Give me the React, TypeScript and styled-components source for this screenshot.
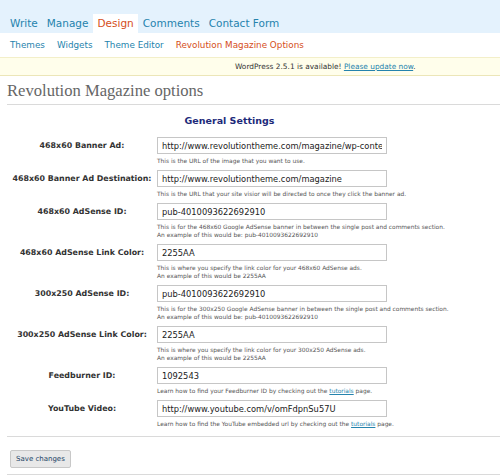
import styled, { createGlobalStyle } from 'styled-components';

const GlobalStyle = createGlobalStyle`
    html, body {
        margin: 0;
        padding: 0;
        background: #fff;
        font-family: "DejaVu Sans", Verdana, sans-serif;
    }
`;

const tabs = ['Write', 'Manage', 'Design', 'Comments', 'Contact Form'];
const subTabs = ['Themes', 'Widgets', 'Theme Editor', 'Revolution Magazine Options'];

const fields = [
    {
        label: '468x60 Banner Ad:',
        value: 'http://www.revolutiontheme.com/magazine/wp-content/themes/revolution/images/banner.gif',
        help: ['This is the URL of the image that you want to use.'],
    },
    {
        label: '468x60 Banner Ad Destination:',
        value: 'http://www.revolutiontheme.com/magazine',
        help: ['This is the URL that your site visior will be directed to once they click the banner ad.'],
    },
    {
        label: '468x60 AdSense ID:',
        value: 'pub-4010093622692910',
        help: [
            'This is for the 468x60 Google AdSense banner in between the single post and comments section.',
            'An example of this would be: pub-4010093622692910',
        ],
    },
    {
        label: '468x60 AdSense Link Color:',
        value: '2255AA',
        help: [
            'This is where you specify the link color for your 468x60 AdSense ads.',
            'An example of this would be 2255AA',
        ],
    },
    {
        label: '300x250 AdSense ID:',
        value: 'pub-4010093622692910',
        help: [
            'This is for the 300x250 Google AdSense banner in between the single post and comments section.',
            'An example of this would be: pub-4010093622692910',
        ],
    },
    {
        label: '300x250 AdSense Link Color:',
        value: '2255AA',
        help: [
            'This is where you specify the link color for your 300x250 AdSense ads.',
            'An example of this would be 2255AA',
        ],
    },
    {
        label: 'Feedburner ID:',
        value: '1092543',
        help: ['Learn how to find your Feedburner ID by checking out the |tutorials| page.'],
    },
    {
        label: 'YouTube Video:',
        value: 'http://www.youtube.com/v/omFdpnSu57U',
        help: ['Learn how to find the YouTube embedded url by checking out the |tutorials| page.'],
    },
];

const Page = styled.div`
    width: 500px;
    height: 475px;
    overflow: hidden;
`;

const TopBar = styled.div`
    background: #e4f2fd;
    height: 33px;
    display: flex;
    align-items: flex-end;
    padding-left: 6px;
    gap: 1px;
`;

const Tab = styled.a<{ active?: boolean }>`
    font-size: 10.5px;
    line-height: 19px;
    padding: 0 4px;
    color: ${(p) => (p.active ? '#d54e21' : '#2583ad')};
    background: ${(p) => (p.active ? '#fff' : 'transparent')};
`;

const SubBar = styled.div`
    height: 24px;
    display: flex;
    align-items: center;
    padding-left: 10px;
    gap: 12px;
`;

const SubTab = styled.a<{ active?: boolean }>`
    font-size: 8.8px;
    color: ${(p) => (p.active ? '#d54e21' : '#2583ad')};
`;

const Nag = styled.div`
    height: 17px;
    background: #fffeeb;
    border-top: 1px solid #f3efc9;
    border-bottom: 1px solid #ece6b8;
    font-size: 7.4px;
    line-height: 17px;
    color: #333;
    padding-left: 235px;
`;

const NagLink = styled.a`
    color: #2583ad;
    text-decoration: underline;
`;

const Wrap = styled.div`
    padding: 0 0 0 7px;
`;

const Title = styled.h2`
    margin: 0;
    padding: 4px 0 3px;
    font-family: "Liberation Serif", "Times New Roman", serif;
    font-weight: normal;
    font-size: 16.6px;
    line-height: 21px;
    color: #666;
    border-bottom: 1px solid #dadada;
`;

const SectionTitle = styled.h3`
    margin: 0;
    padding: 10px 0 11px;
    width: 445px;
    text-align: center;
    font-size: 9.5px;
    font-weight: bold;
    color: #1d2a7a;
`;

const Rows = styled.div`
    display: flex;
    flex-direction: column;
    gap: 5px;
    padding-bottom: 8px;
    border-bottom: 1px solid #dadada;
`;

const Row = styled.div`
    display: grid;
    grid-template-columns: 150px 1fr;
`;

const Label = styled.label`
    height: 17px;
    display: flex;
    align-items: center;
    justify-content: center;
    font-size: 7.9px;
    font-weight: bold;
    color: #333;
    white-space: nowrap;
`;

const Field = styled.div`
    display: flex;
    flex-direction: column;
`;

const Input = styled.input`
    box-sizing: border-box;
    width: 230px;
    height: 17px;
    margin: 0;
    padding: 0 4px;
    border: 1px solid #c6c6c6;
    font-family: "DejaVu Sans", Verdana, sans-serif;
    font-size: 8.3px;
    color: #222;
    background: #fff;
    outline: none;
`;

const Help = styled.div`
    padding-top: 3px;
    font-size: 5.9px;
    line-height: 8px;
    color: #555;
    white-space: nowrap;
`;

const HelpLink = styled.a`
    color: #2583ad;
    text-decoration: underline;
`;

const Footer = styled.div`
    padding: 13px 0 6px 3px;
    border-bottom: 1px solid #dadada;
`;

const SaveButton = styled.button`
    display: block;
    height: 18px;
    padding: 0 5px;
    font-family: "DejaVu Sans", Verdana, sans-serif;
    font-size: 7px;
    color: #246;
    background: #e8e8e8;
    border: 1px solid #c8c8c8;
    border-radius: 2px;
`;

const renderHelp = (line: string) => {
    const parts = line.split('|');
    return parts.map((part, i) => (i === 1 ? <HelpLink key={i}>{part}</HelpLink> : <span key={i}>{part}</span>));
};

export default function App() {
    return (
        <>
            <GlobalStyle />
            <Page>
                <TopBar>
                    {tabs.map((t) => (
                        <Tab key={t} active={t === 'Design'}>
                            {t}
                        </Tab>
                    ))}
                </TopBar>
                <SubBar>
                    {subTabs.map((t) => (
                        <SubTab key={t} active={t === 'Revolution Magazine Options'}>
                            {t}
                        </SubTab>
                    ))}
                </SubBar>
                <Nag>
                    WordPress 2.5.1 is available! <NagLink>Please update now</NagLink>.
                </Nag>
                <Wrap>
                    <Title>Revolution Magazine options</Title>
                    <SectionTitle>General Settings</SectionTitle>
                    <Rows>
                        {fields.map((f) => (
                            <Row key={f.label}>
                                <Label>{f.label}</Label>
                                <Field>
                                    <Input defaultValue={f.value} />
                                    <Help>
                                        {f.help.map((line, i) => (
                                            <div key={i}>{renderHelp(line)}</div>
                                        ))}
                                    </Help>
                                </Field>
                            </Row>
                        ))}
                    </Rows>
                    <Footer>
                        <SaveButton>Save changes</SaveButton>
                    </Footer>
                </Wrap>
            </Page>
        </>
    );
}
